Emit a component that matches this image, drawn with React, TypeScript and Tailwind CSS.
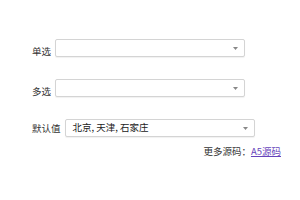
import React from "react";

const font = { fontFamily: '"Noto Sans CJK SC", "Liberation Sans", sans-serif' };

function Arrow() {
  return (
    <svg width="5" height="3" viewBox="0 0 5 3" className="shrink-0">
      <path d="M0 0 L5 0 L2.5 3 Z" fill="#888" />
    </svg>
  );
}

function Box({ text }: { text?: string }) {
  return (
    <div className="flex h-[18px] w-[190px] items-center justify-between rounded-[2px] border border-[#d4d4d4] bg-white pl-[7px] pr-[6px] shadow-[0_1px_1px_rgba(0,0,0,0.06)]">
      <span className="text-[9.5px] leading-none text-[#222]">{text}</span>
      <Arrow />
    </div>
  );
}

export default function App() {
  return (
    <div className="h-[200px] w-[300px] bg-white pl-[32px] pt-[39px] text-[9.5px] text-[#333]" style={font}>
      <div className="flex flex-col gap-[22px]">
        <div className="flex items-end gap-[4px]">
          <span className="leading-[12px]">单选</span>
          <Box />
        </div>
        <div className="flex items-end gap-[4px]">
          <span className="leading-[12px]">多选</span>
          <Box />
        </div>
        <div className="flex items-center gap-[4px]">
          <span className="leading-[12px]">默认值</span>
          <Box text="北京, 天津, 石家庄" />
        </div>
      </div>
      <div className="mt-[8px] flex w-[249px] justify-end leading-[12px]">
        <span>更多源码：</span>
        <a href="#" className="text-[#6644bb] underline">A5源码</a>
      </div>
    </div>
  );
}
